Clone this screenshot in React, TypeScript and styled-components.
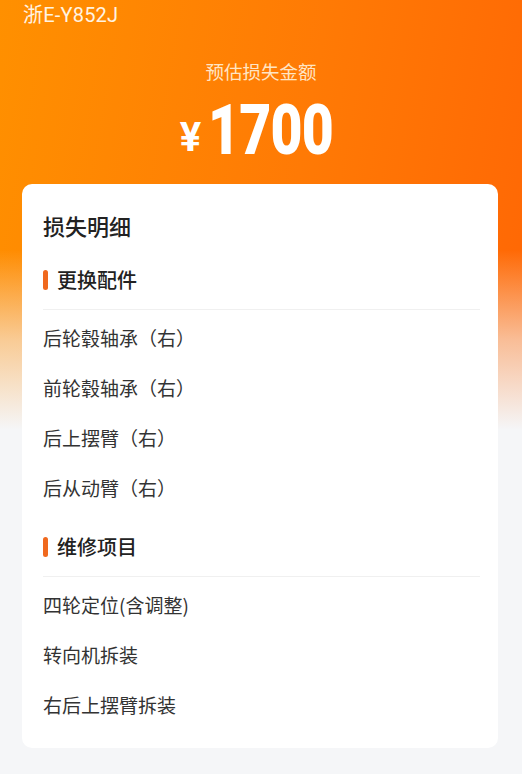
import React from 'react';
import styled, { createGlobalStyle } from 'styled-components';

const GlobalStyle = createGlobalStyle`
  html, body {
    margin: 0;
    padding: 0;
    background: #f5f6f8;
    font-family: "Noto Sans CJK SC", "Noto Sans", sans-serif;
  }
`

const Page = styled.div`
  min-height: 774px;
  width: 522px;
  background:
    linear-gradient(to bottom, rgba(245, 246, 248, 0) 0, rgba(245, 246, 248, 0) 250px, rgba(245, 246, 248, 0.6) 340px, #f5f6f8 430px),
    linear-gradient(100deg, #ff9000 0%, #ff7a05 50%, #ff6205 100%);
  overflow: hidden;
`

const Header = styled.header`
  padding: 3px 23px 0;
  color: #fff;
`

const Plate = styled.div`
  font-family: Roboto, "Noto Sans CJK SC", sans-serif;
  font-size: 20px;
  line-height: 24px;
  letter-spacing: 0.2px;
  color: #fff3e2;
`

const Subtitle = styled.div`
  margin-top: 32px;
  text-align: center;
  font-size: 18.5px;
  line-height: 24px;
  color: #ffe5c4;
`

const Amount = styled.div`
  margin-top: 12px;
  height: 70px;
  padding-right: 12px;
  display: flex;
  justify-content: center;
  align-items: center;
  font-family: Roboto, "Noto Sans", sans-serif;
  font-weight: 700;
  color: #fff;
`

const Currency = styled.span`
  font-size: 40px;
  margin-right: 7px;
  margin-top: 14px;
`

const Number = styled.span`
  display: inline-block;
  font-size: 70px;
  line-height: 70px;
  font-weight: 900;
  transform: scaleX(0.79);
  transform-origin: left center;
  margin-right: -36px;
  letter-spacing: -1px;
`

const Card = styled.section`
  margin: 19px 0 0 22px;
  width: 476px;
  box-sizing: border-box;
  background: #fff;
  border-radius: 10px;
  padding: 26px 18px 19px 21px;
`

const Title = styled.h2`
  margin: 0;
  font-size: 22px;
  line-height: 30px;
  font-weight: 500;
  color: #222;
`

const SectionHead = styled.div<{ $gap: number }>`
  margin-top: ${p => p.$gap}px;
  padding-bottom: 15px;
  border-bottom: 1px solid #f0f0f0;
  display: flex;
  align-items: center;
  gap: 9px;
  font-size: 20px;
  line-height: 28px;
  font-weight: 500;
  color: #222;
`

const Bar = styled.span`
  width: 5px;
  height: 20px;
  border-radius: 3px;
  background: #f0691e;
`

const List = styled.ul`
  list-style: none;
  margin: 2px 0 0;
  padding: 0;
`

const Item = styled.li`
  height: 50px;
  display: flex;
  align-items: center;
  font-size: 19px;
  color: #333;
`

const sections = [
  {
    name: '更换配件',
    gap: 26,
    items: ['后轮毂轴承（右）', '前轮毂轴承（右）', '后上摆臂（右）', '后从动臂（右）'],
  },
  {
    name: '维修项目',
    gap: 21,
    items: ['四轮定位(含调整)', '转向机拆装', '右后上摆臂拆装'],
  },
]

export default function App() {
  return (
    <Page>
      <GlobalStyle />
      <Header>
        <Plate>浙E-Y852J</Plate>
        <Subtitle>预估损失金额</Subtitle>
        <Amount>
          <Currency>¥</Currency>
          <Number>1700</Number>
        </Amount>
      </Header>
      <Card>
        <Title>损失明细</Title>
        {sections.map(sec => (
          <div key={sec.name}>
            <SectionHead $gap={sec.gap}>
              <Bar />
              {sec.name}
            </SectionHead>
            <List>
              {sec.items.map(it => (
                <Item key={it}>{it}</Item>
              ))}
            </List>
          </div>
        ))}
      </Card>
    </Page>
  )
}
